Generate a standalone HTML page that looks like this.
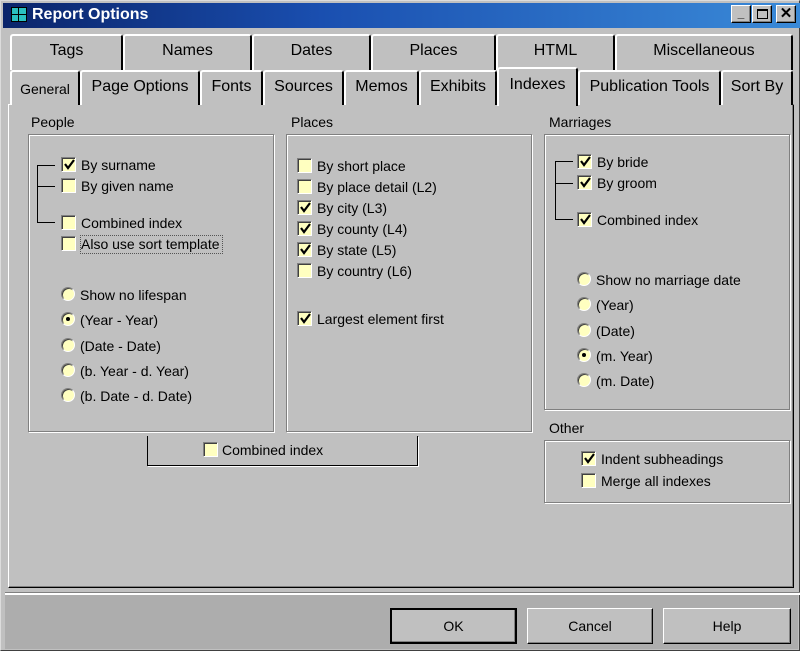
<!DOCTYPE html>
<html><head><meta charset="utf-8"><style>
*{margin:0;padding:0;box-sizing:border-box}
body{width:800px;height:651px;overflow:hidden;background:#c0c0c0;font-family:"Liberation Sans",sans-serif;color:#000;position:relative}
.a{position:absolute}
.t{position:absolute;font-size:14px;white-space:nowrap;line-height:16px}
.tab{position:absolute;background:#c0c0c0;border-top:2px solid #fff;border-left:2px solid #fff;border-right:2px solid #000;border-radius:3px 3px 0 0;font-size:16px;text-align:center;line-height:30px}
.cb{position:absolute;width:15px;height:15px;background:#ffffc0;border-top:1px solid #808080;border-left:1px solid #808080;border-right:1px solid #fff;border-bottom:1px solid #fff;box-shadow:inset 1px 1px 0 #404040}
.cb svg{position:absolute;left:1px;top:1px}
.rb{position:absolute;width:14px;height:14px;border-radius:50%;background:#ffffc0;border:1px solid;border-color:#808080 #fff #fff #808080;box-shadow:inset 1px 1px 0 #404040}
.rb.on::after{content:"";position:absolute;left:4px;top:4px;width:4px;height:4px;border-radius:50%;background:#000}
.grp{position:absolute;border:1px solid #808080;box-shadow:1px 1px 0 #fff,inset 1px 1px 0 #fff}
.btn{position:absolute;height:36px;background:#c0c0c0;border:1px solid;border-color:#fff #000 #000 #fff;box-shadow:inset -1px -1px 0 #808080;font-size:14px;text-align:center;line-height:34px}
.ln{position:absolute;background:#000}
</style></head><body>
<!-- window frame -->
<div class="a" style="left:0;top:0;width:800px;height:651px;border:1px solid #dcdcdc;border-right-color:#404040;border-bottom-color:#404040"></div>
<div class="a" style="left:3px;top:3px;width:797px;height:25px;background:linear-gradient(90deg,#0a246a,#1a4fb0 40%,#3a8ad8)"></div>
<div class="a" style="left:11px;top:7px;width:16px;height:15px;background:#2ac0c0;border:1px solid #000"><div class="a" style="left:6px;top:0;width:1px;height:13px;background:#000"></div><div class="a" style="left:0;top:6px;width:14px;height:1px;background:#000"></div></div>
<div class="a" style="left:32px;top:5px;color:#fff;font-weight:bold;font-size:16px;line-height:20px">Report Options</div>
<div class="btn" style="left:731px;top:5px;width:20px;height:18px;line-height:14px;font-size:12px;font-weight:bold">_</div>
<div class="btn" style="left:752px;top:5px;width:20px;height:18px"><div class="a" style="left:4px;top:3px;width:11px;height:10px;border:1px solid #000;border-top-width:2px"></div></div>
<div class="btn" style="left:776px;top:5px;width:20px;height:18px;line-height:15px;font-weight:bold;font-size:15px">✕</div>

<!-- tabs row 1 -->
<div class="tab" style="left:10px;top:34px;width:113px;height:36px">Tags</div>
<div class="tab" style="left:123px;top:34px;width:129px;height:36px">Names</div>
<div class="tab" style="left:252px;top:34px;width:119px;height:36px">Dates</div>
<div class="tab" style="left:371px;top:34px;width:125px;height:36px">Places</div>
<div class="tab" style="left:496px;top:34px;width:119px;height:36px">HTML</div>
<div class="tab" style="left:615px;top:34px;width:178px;height:36px">Miscellaneous</div>
<!-- panel -->
<div class="a" style="left:8px;top:104px;width:786px;height:484px;border:1px solid;border-color:#fff #000 #000 #fff;box-shadow:inset -1px -1px 0 #808080"></div>
<!-- tabs row 2 -->
<div class="tab" style="left:10px;top:70px;width:70px;height:35px;font-size:14px;line-height:34px">General</div>
<div class="tab" style="left:80px;top:70px;width:120px;height:35px">Page Options</div>
<div class="tab" style="left:200px;top:70px;width:63px;height:35px">Fonts</div>
<div class="tab" style="left:263px;top:70px;width:81px;height:35px">Sources</div>
<div class="tab" style="left:344px;top:70px;width:75px;height:35px">Memos</div>
<div class="tab" style="left:419px;top:70px;width:78px;height:35px">Exhibits</div>
<div class="tab" style="left:497px;top:67px;width:81px;height:39px;border-bottom:none;line-height:32px;z-index:2">Indexes</div>
<div class="tab" style="left:578px;top:70px;width:143px;height:35px">Publication Tools</div>
<div class="tab" style="left:721px;top:70px;width:72px;height:35px">Sort By</div>

<!-- People -->
<div class="t" style="left:31px;top:114px">People</div>
<div class="grp" style="left:28px;top:134px;width:246px;height:298px"></div>
<div class="ln" style="left:37px;top:165px;width:1px;height:58px"></div>
<div class="ln" style="left:37px;top:165px;width:18px;height:1px"></div>
<div class="ln" style="left:37px;top:186px;width:18px;height:1px"></div>
<div class="ln" style="left:37px;top:222px;width:18px;height:1px"></div>
<div class="cb" style="left:61px;top:157px"><svg width="12" height="12"><path d="M2 5l3 4 6-8" stroke="#000" stroke-width="2.2" fill="none"/></svg></div><div class="t" style="left:81px;top:157px">By surname</div>
<div class="cb" style="left:61px;top:178px"></div><div class="t" style="left:81px;top:178px">By given name</div>
<div class="cb" style="left:61px;top:215px"></div><div class="t" style="left:81px;top:215px">Combined index</div>
<div class="cb" style="left:61px;top:236px"></div><div class="t" style="left:80px;top:235px;border:1px dotted #555;padding:0 2px 1px 0">Also use sort template</div>
<div class="rb" style="left:61px;top:287px"></div><div class="t" style="left:80px;top:287px">Show no lifespan</div>
<div class="rb on" style="left:61px;top:312px"></div><div class="t" style="left:80px;top:312px">(Year - Year)</div>
<div class="rb" style="left:61px;top:338px"></div><div class="t" style="left:80px;top:338px">(Date - Date)</div>
<div class="rb" style="left:61px;top:363px"></div><div class="t" style="left:80px;top:363px">(b. Year - d. Year)</div>
<div class="rb" style="left:61px;top:388px"></div><div class="t" style="left:80px;top:388px">(b. Date - d. Date)</div>

<!-- combined index box -->
<div class="a" style="left:147px;top:436px;width:271px;height:30px;border:1px solid #000;border-top:none;box-shadow:1px 1px 0 #fff"></div>
<div class="cb" style="left:203px;top:442px"></div><div class="t" style="left:222px;top:442px">Combined index</div>

<!-- Places -->
<div class="t" style="left:291px;top:114px">Places</div>
<div class="grp" style="left:286px;top:134px;width:246px;height:298px"></div>
<div class="cb" style="left:297px;top:158px"></div><div class="t" style="left:317px;top:158px">By short place</div>
<div class="cb" style="left:297px;top:179px"></div><div class="t" style="left:317px;top:179px">By place detail (L2)</div>
<div class="cb" style="left:297px;top:200px"><svg width="12" height="12"><path d="M2 5l3 4 6-8" stroke="#000" stroke-width="2.2" fill="none"/></svg></div><div class="t" style="left:317px;top:200px">By city (L3)</div>
<div class="cb" style="left:297px;top:221px"><svg width="12" height="12"><path d="M2 5l3 4 6-8" stroke="#000" stroke-width="2.2" fill="none"/></svg></div><div class="t" style="left:317px;top:221px">By county (L4)</div>
<div class="cb" style="left:297px;top:242px"><svg width="12" height="12"><path d="M2 5l3 4 6-8" stroke="#000" stroke-width="2.2" fill="none"/></svg></div><div class="t" style="left:317px;top:242px">By state (L5)</div>
<div class="cb" style="left:297px;top:263px"></div><div class="t" style="left:317px;top:263px">By country (L6)</div>
<div class="cb" style="left:297px;top:311px"><svg width="12" height="12"><path d="M2 5l3 4 6-8" stroke="#000" stroke-width="2.2" fill="none"/></svg></div><div class="t" style="left:317px;top:311px">Largest element first</div>

<!-- Marriages -->
<div class="t" style="left:549px;top:114px">Marriages</div>
<div class="grp" style="left:544px;top:134px;width:246px;height:276px"></div>
<div class="ln" style="left:555px;top:161px;width:1px;height:59px"></div>
<div class="ln" style="left:555px;top:161px;width:18px;height:1px"></div>
<div class="ln" style="left:555px;top:183px;width:18px;height:1px"></div>
<div class="ln" style="left:555px;top:219px;width:18px;height:1px"></div>
<div class="cb" style="left:577px;top:154px"><svg width="12" height="12"><path d="M2 5l3 4 6-8" stroke="#000" stroke-width="2.2" fill="none"/></svg></div><div class="t" style="left:597px;top:154px">By bride</div>
<div class="cb" style="left:577px;top:175px"><svg width="12" height="12"><path d="M2 5l3 4 6-8" stroke="#000" stroke-width="2.2" fill="none"/></svg></div><div class="t" style="left:597px;top:175px">By groom</div>
<div class="cb" style="left:577px;top:212px"><svg width="12" height="12"><path d="M2 5l3 4 6-8" stroke="#000" stroke-width="2.2" fill="none"/></svg></div><div class="t" style="left:597px;top:212px">Combined index</div>
<div class="rb" style="left:577px;top:272px"></div><div class="t" style="left:596px;top:272px">Show no marriage date</div>
<div class="rb" style="left:577px;top:297px"></div><div class="t" style="left:596px;top:297px">(Year)</div>
<div class="rb" style="left:577px;top:323px"></div><div class="t" style="left:596px;top:323px">(Date)</div>
<div class="rb on" style="left:577px;top:348px"></div><div class="t" style="left:596px;top:348px">(m. Year)</div>
<div class="rb" style="left:577px;top:373px"></div><div class="t" style="left:596px;top:373px">(m. Date)</div>

<!-- Other -->
<div class="t" style="left:549px;top:420px">Other</div>
<div class="grp" style="left:544px;top:440px;width:246px;height:63px"></div>
<div class="cb" style="left:581px;top:451px"><svg width="12" height="12"><path d="M2 5l3 4 6-8" stroke="#000" stroke-width="2.2" fill="none"/></svg></div><div class="t" style="left:601px;top:451px">Indent subheadings</div>
<div class="cb" style="left:581px;top:473px"></div><div class="t" style="left:601px;top:473px">Merge all indexes</div>

<!-- bottom -->
<div class="a" style="left:5px;top:592px;width:795px;height:1px;background:#808080"></div>
<div class="a" style="left:5px;top:593px;width:795px;height:2px;background:#fff"></div>
<div class="a" style="left:5px;top:595px;width:793px;height:54px;background:#adadad"></div>
<div class="btn" style="left:390px;top:608px;width:127px;border:2px solid #000;line-height:32px">OK</div>
<div class="btn" style="left:527px;top:608px;width:126px">Cancel</div>
<div class="btn" style="left:663px;top:608px;width:128px">Help</div>
</body></html>
